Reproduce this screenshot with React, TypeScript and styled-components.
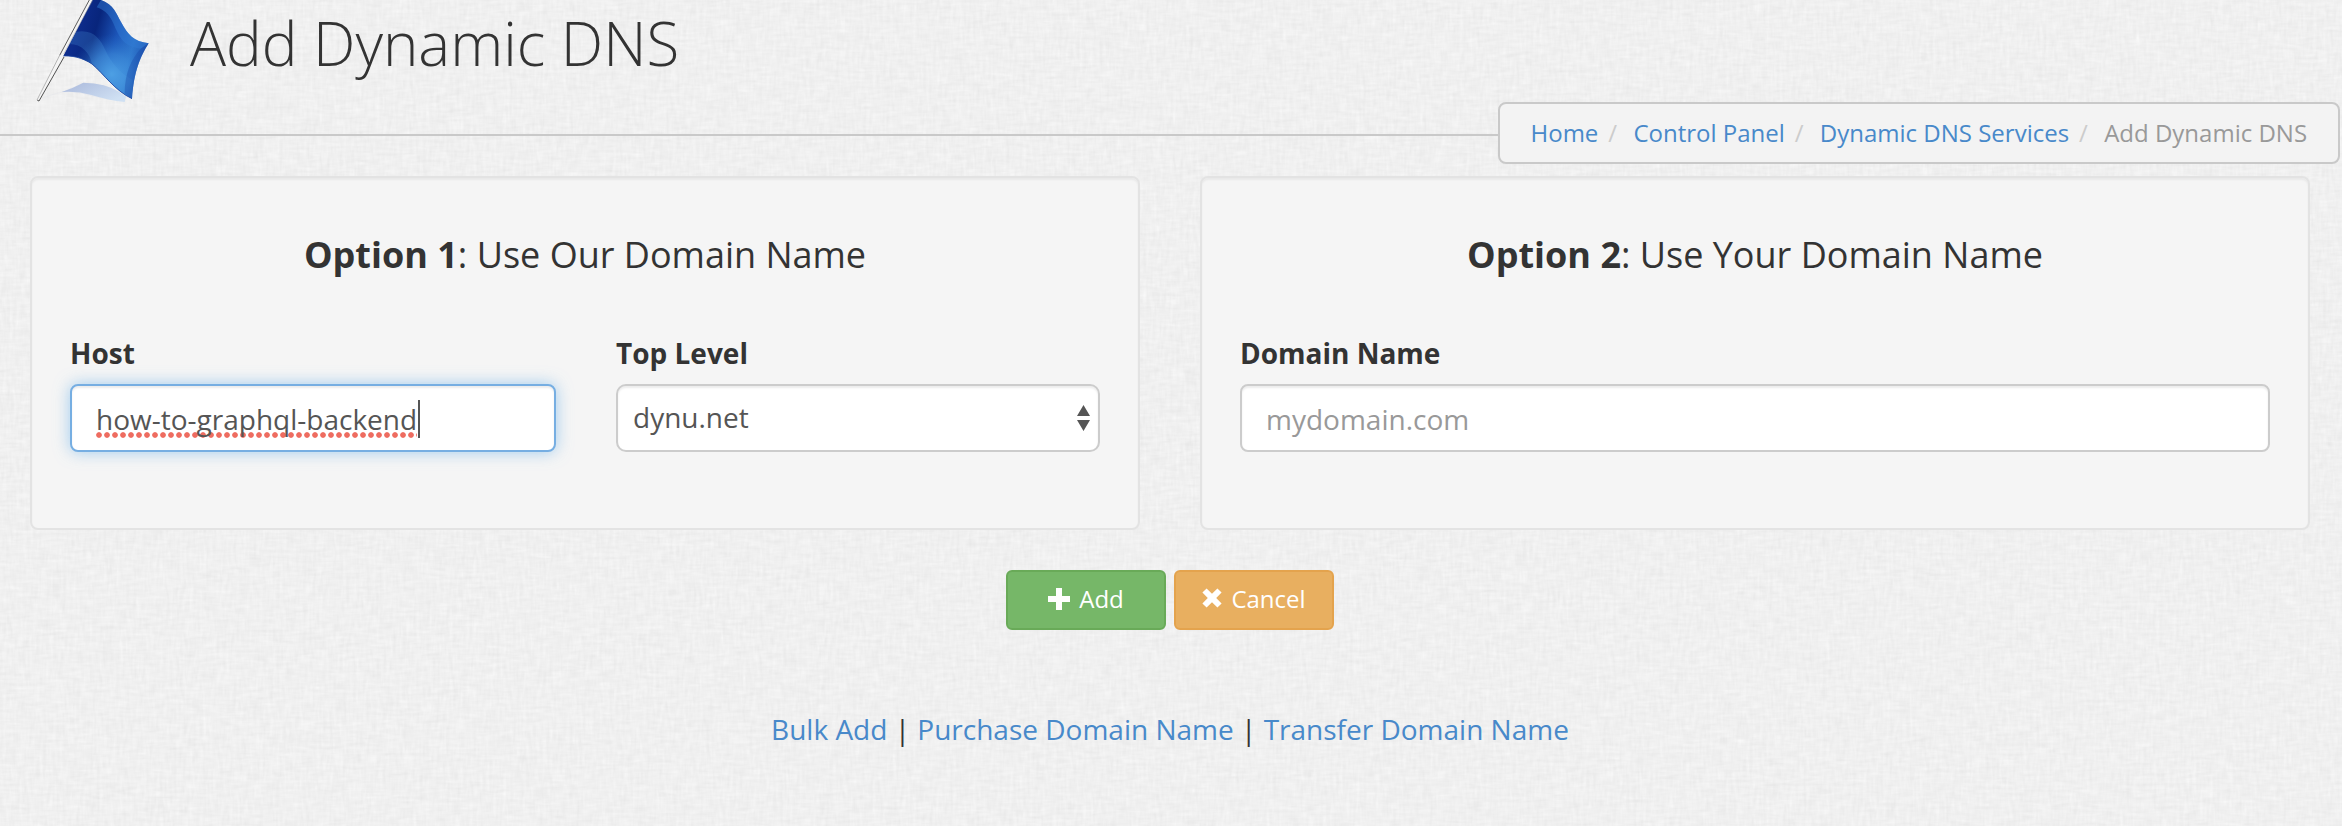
import React from "react";
import styled, { createGlobalStyle, css } from "styled-components";

const GlobalStyle = createGlobalStyle`
  *, *::before, *::after { box-sizing: border-box; }
  html, body { margin: 0; padding: 0; }
  body {
    background: #f0f0f0;
    color: #333;
    font-family: "Open Sans", "Noto Sans", sans-serif;
    font-size: 28px;
    overflow: hidden;
  }
`;

const Page = styled.div`
  position: relative;
  width: 2342px;
  height: 826px;
  overflow: hidden;
  isolation: isolate;
`;

const Texture = styled.svg`
  position: absolute;
  inset: 0;
  width: 100%;
  height: 100%;
  z-index: -1;
`;

const Header = styled.header`
  position: relative;
  display: flex;
  width: 2340px;
  height: 136px;
  padding-left: 20px;
  border-bottom: 2px solid #c9c9c9;
`;

const FlagArt = styled.svg`
  display: block;
  width: 150px;
  height: 120px;
`;

const Title = styled.h1`
  margin: 0 0 0 20px;
  font-size: 60px;
  font-weight: 300;
  line-height: 87px;
  white-space: nowrap;
`;

const Breadcrumb = styled.ol`
  position: absolute;
  top: 102px;
  right: 0;
  display: flex;
  width: 842px;
  height: 62px;
  margin: 0;
  padding: 0 0 0 30.5px;
  list-style: none;
  background: #f3f3f3;
  border: 2px solid #c9c9c9;
  border-radius: 8px;
  font-size: 24px;
  line-height: 58px;
  white-space: pre;
`;

const Crumb = styled.li`
  & + &::before {
    content: "/\\00a0";
    padding: 0 10px;
    color: #ccc;
  }
  &:last-child { color: #999; }
`;

const Link = styled.a`
  color: #4889ca;
  text-decoration: none;
`;

const Options = styled.main`
  display: grid;
  grid-template-columns: 1110px 1110px;
  column-gap: 60px;
  padding: 40px 0 0 30px;
`;

const Well = styled.section`
  height: 354px;
  padding: 0 38px;
  background: #f5f5f5;
  border: 2px solid #e3e3e3;
  border-radius: 8px;
  box-shadow: inset 0 2px 2px rgba(0, 0, 0, 0.05);
`;

const WellTitle = styled.h2`
  margin: 52px 0 0;
  font-size: 36px;
  font-weight: 400;
  line-height: 50px;
  text-align: center;
`;

const Fields = styled.div`
  display: flex;
  justify-content: space-between;
  margin-top: 54px;
`;

const Field = styled.div<{ $width: number }>`
  width: ${(p) => p.$width}px;
`;

const Label = styled.label`
  display: block;
  height: 50px;
  font-weight: 700;
  line-height: 38px;
`;

const control = css`
  display: flex;
  height: 68px;
  background: #fff;
  border: 2px solid #ccc;
  border-radius: 8px;
  box-shadow: inset 0 2px 2px rgba(0, 0, 0, 0.075);
  color: #555;
`;

const TextBox = styled.div<{ $focused?: boolean; $empty?: boolean }>`
  ${control}
  padding: 0 24px;
  line-height: 67px;
  ${(p) => p.$empty && "color: #999;"}
  ${(p) =>
    p.$focused &&
    css`
      border-color: #76aee2;
      box-shadow: inset 0 2px 2px rgba(0, 0, 0, 0.075),
        0 0 16px rgba(102, 175, 233, 0.6);
    `}
`;

const Misspelled = styled.span`
  height: 52px;
  background: radial-gradient(circle at 3px 3px, #ee6c60 2.4px, transparent 3.2px)
    0 100% / 8px 6px repeat-x;
`;

const Caret = styled.span`
  width: 2px;
  height: 38px;
  margin: 14px 0 0 1px;
  background: #555;
`;

const SelectBox = styled.div`
  ${control}
  justify-content: space-between;
  align-items: center;
  padding: 0 8px 2px 15px;
  border-radius: 10px;
  line-height: 62px;
`;

const SelectArrows = styled.svg`
  width: 13px;
  height: 26px;
  margin-top: 2px;
`;

const Actions = styled.div`
  display: flex;
  justify-content: center;
  gap: 8px;
  width: 2340px;
  margin-top: 40px;
`;

const Button = styled.button<{ $tone: "success" | "warning" }>`
  display: flex;
  justify-content: center;
  align-items: center;
  width: 160px;
  height: 60px;
  padding: 0 0 2px;
  border: 2px solid ${(p) => (p.$tone === "success" ? "#69aa58" : "#e4a34d")};
  border-radius: 6px;
  background: ${(p) => (p.$tone === "success" ? "#76b768" : "#e8af60")};
  color: #fff;
  font: 400 24px/54px "Open Sans", "Noto Sans", sans-serif;
`;

const ButtonIcon = styled.svg<{ $size: number; $lift?: number }>`
  width: ${(p) => p.$size}px;
  height: ${(p) => p.$size}px;
  margin: 0 9px ${(p) => p.$lift ?? 0}px 0;
  fill: #fff;
`;

const FooterLinks = styled.nav`
  width: 2340px;
  margin-top: 80px;
  line-height: 38px;
  text-align: center;
`;

function Linen() {
  return (
    <Texture aria-hidden="true">
      <filter id="linen" x="0" y="0" width="100%" height="100%" colorInterpolationFilters="sRGB">
        <feTurbulence type="fractalNoise" baseFrequency="0.3 0.06" numOctaves="2" seed="4" result="weft" />
        <feTurbulence type="fractalNoise" baseFrequency="0.06 0.3" numOctaves="2" seed="9" result="warp" />
        <feComposite in="weft" in2="warp" operator="arithmetic" k1="0" k2="0.5" k3="0.5" k4="0" />
        <feColorMatrix
          values="0.08 0.04 0 0 0.88
                  0.08 0.04 0 0 0.88
                  0.08 0.04 0 0 0.88
                  0 0 0 0 1"
        />
      </filter>
      <rect width="100%" height="100%" filter="url(#linen)" />
    </Texture>
  );
}

function Flag() {
  return (
    <FlagArt viewBox="0 0 450 360" aria-hidden="true">
      <defs>
        <linearGradient id="cloth" gradientUnits="userSpaceOnUse" x1="170" y1="90" x2="380" y2="150">
          <stop offset="0" stopColor="#0d2c8c" />
          <stop offset="0.25" stopColor="#08257c" />
          <stop offset="0.55" stopColor="#1c55b8" />
          <stop offset="0.8" stopColor="#2f78cd" />
          <stop offset="1" stopColor="#2057b3" />
        </linearGradient>
        <radialGradient id="sheen" gradientUnits="userSpaceOnUse" cx="275" cy="222" r="120">
          <stop offset="0" stopColor="#52a9ea" stopOpacity="0.85" />
          <stop offset="0.5" stopColor="#3f8edb" stopOpacity="0.6" />
          <stop offset="1" stopColor="#2468c6" stopOpacity="0" />
        </radialGradient>
        <linearGradient id="shade" x1="0" y1="0" x2="1" y2="0.6">
          <stop offset="0" stopColor="#a9b7da" />
          <stop offset="1" stopColor="#cfe0f3" />
        </linearGradient>
      </defs>
      <path d="M62 296 Q90 282 125 276 L190 248 Q260 250 312 288 L314 304 Q240 298 190 282 Q150 272 110 281 Z" fill="#e3e6ec" opacity="0.5" />
      <path d="M125 276 Q160 264 190 248 Q258 249 298 276 L318 290 L314 306 Q266 301 214 285 Q170 272 125 276 Z" fill="url(#shade)" />
      <path
        d="M216 0 L243 0 C282 14 288 40 303 66 C324 104 340 124 386 130 C360 172 342 214 336 296 C284 272 252 222 216 192 C186 172 156 166 122 168 Z"
        fill="url(#cloth)"
      />
      <path
        d="M216 0 L243 0 C282 14 288 40 303 66 C324 104 340 124 386 130 C360 172 342 214 336 296 C284 272 252 222 216 192 C186 172 156 166 122 168 Z"
        fill="url(#sheen)"
      />
      <path d="M243 0 C282 14 288 40 303 66 C324 104 340 124 386 130 L362 146 C310 140 300 112 286 84 C272 48 258 32 230 22 Z" fill="#2f7ad4" opacity="0.5" />
      <path d="M166 96 C220 86 240 116 256 150 C272 186 298 218 338 240 L336 296 C284 272 252 222 216 192 C210 160 186 132 148 132 Z" fill="#58a8ea" opacity="0.22" />
      <path d="M386 130 C360 172 342 214 336 296 L314 280 C314 220 334 176 362 146 Z" fill="#1746a6" opacity="0.35" />
      <path d="M122 168 C156 166 186 172 216 192 C252 222 284 272 336 296" fill="none" stroke="#1c459f" strokeWidth="2.5" />
      <path d="M209 -4 L120 166 L52 300 L58 304 L128 172 L219 -4 Z" fill="#f4f4f4" />
      <path d="M209 -2 L119 166" fill="none" stroke="#444" strokeWidth="2.6" />
      <path d="M119 166 L51 300" fill="none" stroke="#999" strokeWidth="2" />
      <path d="M218 0 L131 162" fill="none" stroke="#a7a7a7" strokeWidth="1.5" />
      <path d="M132 171 L57 303 L52 301" fill="none" stroke="#444" strokeWidth="2.8" />
    </FlagArt>
  );
}

export default function App() {
  return (
    <Page>
      <GlobalStyle />
      <Linen />
      <Header>
        <Flag />
        <Title>Add Dynamic DNS</Title>
        <Breadcrumb>
          <Crumb><Link>Home</Link></Crumb>
          <Crumb><Link>Control Panel</Link></Crumb>
          <Crumb><Link>Dynamic DNS Services</Link></Crumb>
          <Crumb>Add Dynamic DNS</Crumb>
        </Breadcrumb>
      </Header>

      <Options>
        <Well>
          <WellTitle><b>Option 1</b>: Use Our Domain Name</WellTitle>
          <Fields>
            <Field $width={486}>
              <Label>Host</Label>
              <TextBox $focused>
                <Misspelled>how-to-graphql-backend</Misspelled>
                <Caret />
              </TextBox>
            </Field>
            <Field $width={484}>
              <Label>Top Level</Label>
              <SelectBox>
                dynu.net
                <SelectArrows viewBox="0 0 13 26" aria-hidden="true">
                  <path d="M0 11 L6.5 0 L13 11 Z M0 15 L13 15 L6.5 26 Z" fill="#555" />
                </SelectArrows>
              </SelectBox>
            </Field>
          </Fields>
        </Well>
        <Well>
          <WellTitle><b>Option 2</b>: Use Your Domain Name</WellTitle>
          <Fields>
            <Field $width={1030}>
              <Label>Domain Name</Label>
              <TextBox $empty>mydomain.com</TextBox>
            </Field>
          </Fields>
        </Well>
      </Options>

      <Actions>
        <Button $tone="success">
          <ButtonIcon $size={22} viewBox="0 0 22 22" aria-hidden="true">
            <path d="M8 0h6v8h8v6h-8v8h-6v-8h-8v-6h8z" />
          </ButtonIcon>
          Add
        </Button>
        <Button $tone="warning">
          <ButtonIcon $size={20} $lift={2} viewBox="0 0 20 20" aria-hidden="true">
            <path d="M4.6 0.4 L10 5.8 L15.4 0.4 L19.6 4.6 L14.2 10 L19.6 15.4 L15.4 19.6 L10 14.2 L4.6 19.6 L0.4 15.4 L5.8 10 L0.4 4.6 Z" />
          </ButtonIcon>
          Cancel
        </Button>
      </Actions>

      <FooterLinks>
        <Link>Bulk Add</Link> | <Link>Purchase Domain Name</Link> | <Link>Transfer Domain Name</Link>
      </FooterLinks>
    </Page>
  );
}
